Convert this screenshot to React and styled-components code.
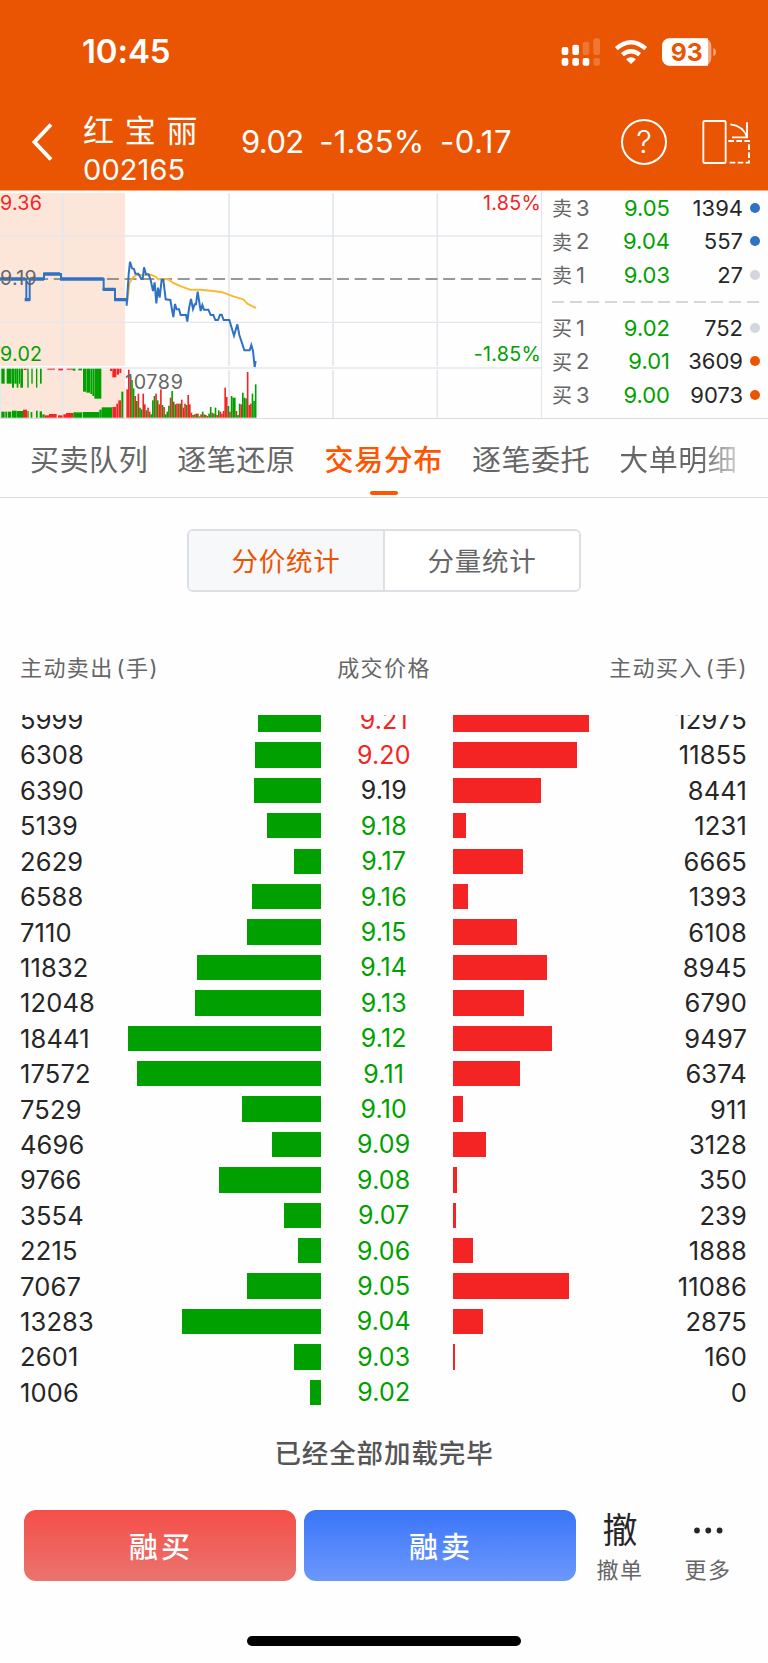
import React, { useState } from 'react';
import styled, { createGlobalStyle } from 'styled-components';

const RED = '#f52424';
const GREEN = '#00a000';
const ORANGE = '#ea5504';
const INK = '#262626';
const GREY = '#666';

const GlobalStyle = createGlobalStyle`
    * {
        box-sizing: border-box;
    }
    body {
        margin: 0;
        background: #fefefe;
        font-family: Inter, "Noto Sans CJK SC", sans-serif;
        color: ${INK};
    }
    button {
        font-family: inherit;
        border: none;
        padding: 0;
        margin: 0;
        background: none;
        color: inherit;
    }
`
const Page = styled.div`
    width: 768px;
    height: 1663px;
    display: flex;
    flex-direction: column;
    overflow: hidden;
`

/* header */
const Header = styled.header`
    height: 191px;
    flex: none;
    background: ${ORANGE};
    border-bottom: 1px solid #f4aa82;
    color: #fff;
`
const StatusBar = styled.div`
    height: 103px;
    padding: 0 51px 0 82px;
    display: flex;
    align-items: center;
    justify-content: space-between;
`
const Clock = styled.span`
    font-size: 33px;
    font-weight: 600;
    letter-spacing: -0.1px;
    margin-bottom: 1px;
`
const NavRow = styled.div`
    height: 87px;
    padding: 0 17px 0 31px;
    display: flex;
    align-items: center;
`
const BackButton = styled.button`
    width: 52px;
    height: 40px;
    margin-bottom: 10px;
`
const Stock = styled.div`
    width: 158px;
    padding-top: 8px;
`
const StockName = styled.div`
    font-size: 31px;
    line-height: 38px;
    letter-spacing: 10.7px;
    font-weight: 400;
`
const StockCode = styled.div`
    font-size: 29px;
    line-height: 39px;
    letter-spacing: 0.1px;
`
const Quote = styled.div`
    flex: 1;
    display: flex;
    gap: 15.5px;
    font-size: 31px;
    margin-bottom: 10px;
    letter-spacing: 0.3px;
    span:first-child {
        letter-spacing: -0.6px;
    }
    span:last-child {
        letter-spacing: 0.5px;
    }
`
const NavIcons = styled.div`
    display: flex;
    align-items: center;
    gap: 34px;
    margin-bottom: 10px;
`
const HelpButton = styled.button`
    width: 46px;
    height: 46px;
    border: 2px solid #fff;
    border-radius: 50%;
    font-size: 31px;
    font-weight: 300;
    line-height: 42px;
`

/* market panel */
const Market = styled.section`
    height: 228px;
    flex: none;
    display: flex;
    border-bottom: 1px solid #d9dbe0;
`
const ChartBox = styled.div`
    width: 542px;
    border-right: 1px solid #e3e5ea;
`
const Orders = styled.div`
    flex: 1;
    padding: 0 8px 0 10px;
`
const OrderRow = styled.div`
    height: 33.5px;
    display: flex;
    align-items: center;
    font-size: 22px;
`
const OrderLabel = styled.span`
    width: 58px;
    color: ${GREY};
    font-size: 20px;
    display: flex;
    align-items: center;
    gap: 4px;
`
const OrderLevel = styled.span`
    font-size: 22px;
`
const OrderPrice = styled.span`
    width: 60px;
    text-align: right;
    color: ${GREEN};
`
const OrderVolume = styled.span`
    flex: 1;
    text-align: right;
`
const Dot = styled.i`
    width: 10px;
    height: 10px;
    margin-left: 7px;
    border-radius: 50%;
    background: ${props => props.$color};
`
const OrderDivider = styled.div`
    height: 2px;
    margin: 9.5px 0 8px;
    background: repeating-linear-gradient(90deg, #d3d6dc 0 12px, transparent 12px 17.7px);
`

/* tabs */
const Tabs = styled.nav`
    height: 79px;
    flex: none;
    display: flex;
    gap: 29.1px;
    padding-left: 30px;
    border-bottom: 1px solid #d9dce2;
`
const Tab = styled.button`
    height: 78px;
    display: flex;
    flex-direction: column;
    align-items: center;
    flex: none;
    font-size: 29px;
    line-height: 43px;
    padding-top: 20px;
    letter-spacing: 0.55px;
    font-weight: ${props => (props.$active ? 500 : 400)};
    color: ${props => (props.$active ? '#ff5500' : GREY)};
    ${props => props.$fade && `
        color: transparent;
        background: linear-gradient(90deg, ${GREY} 68%, #ccc 100%);
        background-clip: text;
        -webkit-background-clip: text;
    `}
    &::after {
        content: "";
        width: 28px;
        height: 4px;
        margin-top: 9px;
        border-radius: 2px;
        background: ${props => (props.$active ? '#ff5500' : 'transparent')};
    }
`
const Segment = styled.div`
    width: 394px;
    height: 63px;
    flex: none;
    margin: 31px 0 0 187px;
    display: flex;
    border: 2px solid #dcdfe4;
    border-radius: 6px;
    overflow: hidden;
`
const SegmentButton = styled.button`
    flex: 1;
    font-size: 26.5px;
    letter-spacing: 0.8px;
    padding-bottom: 2px;
    color: ${props => (props.$active ? ORANGE : GREY)};
    background: ${props => (props.$active ? '#f7f8fa' : '#fff')};
    & + & {
        border-left: 2px solid #dcdfe4;
    }
`

/* distribution */
const Columns = styled.div`
    height: 123px;
    flex: none;
    padding: 30px 20px 0 20px;
    display: grid;
    grid-template-columns: 1fr 100px 1fr;
    font-size: 22px;
    letter-spacing: 1.4px;
    line-height: 92px;
    color: ${GREY};
`
const ColumnTitle = styled.span`
    text-align: ${props => props.$align};
    white-space: nowrap;
`
const Unit = styled.span`
    margin-left: 3px;
`
const List = styled.div`
    height: 695px;
    flex: none;
    overflow: hidden;
    display: flex;
    flex-direction: column;
    justify-content: flex-end;
`
const Row = styled.div`
    height: 35.42px;
    flex: none;
    display: grid;
    grid-template-columns: 106px 195px 132px 195px 99px;
    padding: 0 21px 0 20px;
    align-items: center;
    font-size: 25.5px;
    letter-spacing: 0.15px;
`
const Price = styled.span`
    text-align: center;
    padding-right: 6.5px;
    font-size: 25px;
    color: ${props => props.$color};
`
const Volume = styled.span`
    text-align: ${props => props.$align};
    white-space: nowrap;
`
const Bar = styled.div`
    height: 25.4px;
    justify-self: ${props => (props.$sell ? 'end' : 'start')};
    background: ${props => (props.$sell ? GREEN : RED)};
`
const Loaded = styled.p`
    height: 100px;
    flex: none;
    margin: 0;
    text-align: center;
    font-size: 26.5px;
    font-weight: 500;
    letter-spacing: 0.9px;
    line-height: 87px;
    color: #555;
`

/* bottom bar */
const Actions = styled.div`
    height: 126px;
    flex: none;
    display: flex;
    align-items: flex-start;
    gap: 8px;
    padding-left: 24px;
`
const TradeButton = styled.button`
    width: 272px;
    height: 71px;
    border-radius: 12px;
    padding: 0 0 2px 2px;
    font-size: 29px;
    font-weight: 500;
    letter-spacing: 3px;
    color: #fff;
    background: linear-gradient(180deg, ${props => props.$from}, ${props => props.$to});
`
const SmallActions = styled.div`
    display: flex;
    gap: 8px;
    margin-left: -4px;
`
const SmallAction = styled.button`
    width: 80px;
    height: 80px;
    display: flex;
    flex-direction: column;
    align-items: center;
`
const ActionIcon = styled.span`
    height: 42px;
    flex: none;
    display: flex;
    font-size: 35px;
    line-height: 40px;
`
const ActionLabel = styled.span`
    font-size: 22px;
    line-height: 36px;
    letter-spacing: 1.4px;
    color: ${GREY};
`
const HomeIndicator = styled.div`
    width: 274px;
    height: 10px;
    flex: none;
    margin: 0 auto;
    border-radius: 5px;
    background: #000;
`

const orders = [
    { side: '卖', level: 3, price: '9.05', volume: 1394, dot: '#2f72c4' },
    { side: '卖', level: 2, price: '9.04', volume: 557, dot: '#2f72c4' },
    { side: '卖', level: 1, price: '9.03', volume: 27, dot: '#d3d6dc' },
    { side: '买', level: 1, price: '9.02', volume: 752, dot: '#d3d6dc' },
    { side: '买', level: 2, price: '9.01', volume: 3609, dot: ORANGE },
    { side: '买', level: 3, price: '9.00', volume: 9073, dot: ORANGE },
]

const tabs = ['买卖队列', '逐笔还原', '交易分布', '逐笔委托', '大单明细']

// [sell, price, buy]
const distribution = [
    [5999, '9.21', 12975],
    [6308, '9.20', 11855],
    [6390, '9.19', 8441],
    [5139, '9.18', 1231],
    [2629, '9.17', 6665],
    [6588, '9.16', 1393],
    [7110, '9.15', 6108],
    [11832, '9.14', 8945],
    [12048, '9.13', 6790],
    [18441, '9.12', 9497],
    [17572, '9.11', 6374],
    [7529, '9.10', 911],
    [4696, '9.09', 3128],
    [9766, '9.08', 350],
    [3554, '9.07', 239],
    [2215, '9.06', 1888],
    [7067, '9.05', 11086],
    [13283, '9.04', 2875],
    [2601, '9.03', 160],
    [1006, '9.02', 0],
]
const LAST_CLOSE = 9.19
const MAX_VOLUME = 18441
const MAX_BAR = 193

// call auction bars: [x, width, height, color]
const auctionTop = [
    [4, 10, 45, 'g'], [20, 15, 45, 'g'], [36, 6, 57, 'g'], [43, 7, 45, 'g'], [50, 5, 57, 'g'], [56, 4, 45, 'g'],
    [61, 8, 57, 'g'], [71, 9, 4, 'r'], [82, 4, 57, 'g'], [94, 4, 45, 'g'], [108, 4, 57, 'g'], [120, 5, 45, 'g'],
    [142, 23, 3, 'r'], [175, 14, 5, 'r'], [200, 18, 3, 'r'], [218, 8, 6, 'g'], [235, 11, 5, 'g'], [249, 9, 69, 'g'],
    [259, 11, 72, 'g'], [271, 5, 76, 'g'], [277, 5, 82, 'g'], [283, 21, 90, 'g'], [330, 6, 7, 'r'], [337, 12, 26, 'r'],
    [350, 7, 18, 'r'], [358, 6, 13, 'r'],
]
const auctionBottom = [
    [4, 10, 18, 'g'], [16, 5, 18, 'g'], [23, 11, 18, 'g'], [36, 14, 21, 'g'], [51, 18, 20, 'g'], [69, 12, 24, 'r'],
    [82, 4, 20, 'g'], [92, 5, 17, 'g'], [108, 5, 21, 'g'], [119, 7, 19, 'g'], [127, 7, 10, 'g'], [134, 13, 7, 'r'],
    [147, 23, 11, 'r'], [174, 14, 7, 'r'], [190, 8, 10, 'r'], [198, 22, 14, 'r'], [220, 26, 16, 'g'], [248, 50, 17, 'g'],
    [298, 7, 24, 'g'], [305, 31, 31, 'g'], [337, 11, 32, 'r'], [349, 5, 42, 'r'], [355, 8, 52, 'r'], [364, 6, 78, 'g'],
]
const minuteVolume = 'r85 r144 r125 g113 g88 r65 g50 r72 g30 g25 r72 r40 g22 r30 r18 g10 g52 g65 r72 g52 r40 r85 g38 r32 g10 g18 g36 r60 g80 r48 g40 r42 r42 g42 r54 r30 r42 g38 r68 r40 r15 g8 r10 g12 r12 g4 r10 g18 r10 g8 r5 g12 g32 r15 g12 g30 r8 g22 r18 r12 r20 r90 r62 g35 r18 g65 g60 g60 r20 g8 g42 r40 g75 g60 g58 r137 r38 r42 g72 g50 g100'.split(' ')

const fills = { r: RED, g: GREEN }

const StatusIcons = () => (
    <svg width="157" height="32" viewBox="480 105 471 96" fill="#fff">
        <rect x="485" y="138" width="20" height="24" rx="6" />
        <rect x="517" y="131" width="20" height="31" rx="6" />
        <rect x="548" y="122" width="20" height="40" rx="6" opacity=".2" />
        <rect x="580" y="112" width="20" height="50" rx="6" opacity=".2" />
        <rect x="485" y="171" width="20" height="23" rx="6" />
        <rect x="517" y="171" width="20" height="23" rx="6" />
        <rect x="548" y="171" width="20" height="23" rx="6" />
        <rect x="580" y="171" width="20" height="23" rx="6" opacity=".2" />
        <path d="M678 175q15-12 30 0l-15 14z" />
        <path d="M667 161q26-21 52 0M649 143q44-38 88 0" fill="none" stroke="#fff" strokeWidth="13" />
        <rect x="786" y="112" width="148" height="82" rx="23" opacity=".5" />
        <path d="M809 112h115v82h-115a23 23 0 0 1-23-23v-36a23 23 0 0 1 23-23z" />
        <path d="M940 141q8 3 8 12t-8 12z" opacity=".5" />
        <text x="860" y="179" fontSize="74" fontWeight="700" textAnchor="middle" fill={ORANGE}>93</text>
    </svg>
)

const RotateIcon = () => (
    <svg width="50" height="48" viewBox="902 352 150 144" fill="none" stroke="#fff" strokeWidth="5.5">
        <rect x="909" y="361" width="67" height="126" rx="4" />
        <path d="M990 371q38 4 50 38M1040 365v45h-45" />
        <path d="M984 421h62v65h-62" strokeDasharray="17 7" />
    </svg>
)

const Bars = ({ data, top }) => data.map(([x, w, h, c]) => (
    <rect key={x} x={x} y={top ? 551 : 698 - h} width={w} height={h} fill={fills[c]} />
))

const Chart = () => (
    <svg width="541" height="227" viewBox="0 18 1623 681" fontSize="59" style={{ display: 'block' }}>
        <rect x="0" y="24" width="375" height="519" fill="#fce6da" />
        <rect x="0" y="553" width="375" height="146" fill="#fce6da" />
        <g stroke="#e3e7ee" strokeWidth="5">
            <path d="M188 24V543M687 24V543M999 24V543M1312 24V543" />
            <path d="M188 555V699M687 555V699M999 555V699M1312 555V699" />
            <path d="M0 153H1623M0 412H1623M0 549H1623" strokeWidth="4" />
            <path d="M1 553V699" />
        </g>
        <path d="M2 282H1623" stroke="#777" strokeWidth="5" strokeDasharray="36 17.1" />
        <Bars data={auctionTop} top />
        <Bars data={auctionBottom} />
        {minuteVolume.map((v, i) => {
            const h = Number(v.slice(1))
            return <rect key={i} x={379 + i * 4.82} y={698 - h} width="4.9" height={h} fill={fills[v[0]]} />
        })}
        <polyline
            fill="none" stroke="#fdb833" strokeWidth="6" strokeLinejoin="round"
            points="382,350 388,295 398,278 410,270 455,270 465,274 475,283 505,283 520,294 545,305 570,314 600,314 640,318 668,322 700,334 730,343 742,356 768,369"
        />
        <polyline
            fill="none" stroke="#2f72c4" strokeWidth="6"
            points="0,282 79,282 79,344 89,344 89,282 132,282 132,267 183,267 183,282 311,282 311,313 345,313 345,344 380,344 380,362 386,268 390,230 396,250 402,252 406,266 415,266 424,282 428,282 432,247 438,268 446,268 452,285 459,318 464,292 469,355 474,308 479,338 485,284 490,284 497,343 511,345 520,396 525,357 530,373 537,373 542,390 558,390 562,410 567,370 573,342 579,372 584,358 588,358 593,320 602,378 607,360 612,374 625,374 632,390 640,390 646,405 654,405 660,389 665,389 671,405 688,405 702,452 712,418 718,450 733,496 749,496 754,480 759,498 764,546 767,528"
        />
        <path
            d="M0 282H76M74 344H90M90 282H132M130 267H180M180 282H311M308 313H346M343 344H380"
            stroke="#2f72c4" strokeWidth="10"
        />
        <g letterSpacing=".8">
            <text x="0" y="74" fill={RED}>9.36</text>
            <text x="0" y="300" fill={GREY}>9.19</text>
            <text x="0" y="527" fill={GREEN}>9.02</text>
            <text x="1623" y="74" fill={RED} textAnchor="end">1.85%</text>
            <text x="1623" y="527" fill={GREEN} textAnchor="end">-1.85%</text>
            <text x="375" y="611" fill={GREY} letterSpacing="2">10789</text>
        </g>
    </svg>
)

const OrderItem = ({ item }) => (
    <OrderRow>
        <OrderLabel>{item.side}<OrderLevel>{item.level}</OrderLevel></OrderLabel>
        <OrderPrice>{item.price}</OrderPrice>
        <OrderVolume>{item.volume}</OrderVolume>
        <Dot $color={item.dot} />
    </OrderRow>
)

const priceColor = (price) => {
    if (Number(price) > LAST_CLOSE) return RED
    if (Number(price) < LAST_CLOSE) return GREEN
    return INK
}

const App = () => {
    const [tab, setTab] = useState(2)
    const [mode, setMode] = useState('price')

    return (
        <Page>
            <GlobalStyle />
            <Header>
                <StatusBar>
                    <Clock>10:45</Clock>
                    <StatusIcons />
                </StatusBar>
                <NavRow>
                    <BackButton aria-label="back">
                        <svg width="52" height="40" viewBox="0 0 52 40" fill="none" stroke="#fff" strokeWidth="4">
                            <path d="M20 2.5L3.5 20L20 37.5" />
                        </svg>
                    </BackButton>
                    <Stock>
                        <StockName>红宝丽</StockName>
                        <StockCode>002165</StockCode>
                    </Stock>
                    <Quote>
                        <span>9.02</span>
                        <span>-1.85%</span>
                        <span>-0.17</span>
                    </Quote>
                    <NavIcons>
                        <HelpButton>?</HelpButton>
                        <RotateIcon />
                    </NavIcons>
                </NavRow>
            </Header>
            <Market>
                <ChartBox>
                    <Chart />
                </ChartBox>
                <Orders>
                    {orders.slice(0, 3).map(item => <OrderItem key={item.price} item={item} />)}
                    <OrderDivider />
                    {orders.slice(3).map(item => <OrderItem key={item.price} item={item} />)}
                </Orders>
            </Market>
            <Tabs>
                {tabs.map((name, i) => (
                    <Tab key={name} $active={tab === i} $fade={i === 4} onClick={() => setTab(i)}>{name}</Tab>
                ))}
            </Tabs>
            <Segment>
                <SegmentButton $active={mode === 'price'} onClick={() => setMode('price')}>分价统计</SegmentButton>
                <SegmentButton $active={mode === 'volume'} onClick={() => setMode('volume')}>分量统计</SegmentButton>
            </Segment>
            <Columns>
                <ColumnTitle $align="left">主动卖出<Unit>(手)</Unit></ColumnTitle>
                <ColumnTitle $align="center">成交价格</ColumnTitle>
                <ColumnTitle $align="right">主动买入<Unit>(手)</Unit></ColumnTitle>
            </Columns>
            <List>
                {distribution.map(([sell, price, buy]) => (
                    <Row key={price}>
                        <Volume $align="left">{sell}</Volume>
                        <Bar $sell style={{ width: sell / MAX_VOLUME * MAX_BAR }} />
                        <Price $color={priceColor(price)}>{price}</Price>
                        <Bar style={{ width: buy / MAX_VOLUME * MAX_BAR }} />
                        <Volume $align="right">{buy}</Volume>
                    </Row>
                ))}
            </List>
            <Loaded>已经全部加载完毕</Loaded>
            <Actions>
                <TradeButton $from="#f54e49" $to="#ea746e">融买</TradeButton>
                <TradeButton $from="#3a75f8" $to="#6c98fd">融卖</TradeButton>
                <SmallActions>
                    <SmallAction>
                        <ActionIcon>撤</ActionIcon>
                        <ActionLabel>撤单</ActionLabel>
                    </SmallAction>
                    <SmallAction>
                        <ActionIcon>
                            <svg width="30" height="42" viewBox="0 0 30 42" fill={INK}>
                                <circle cx="4" cy="20.5" r="2.9" />
                                <circle cx="15.3" cy="20.5" r="2.9" />
                                <circle cx="26.6" cy="20.5" r="2.9" />
                            </svg>
                        </ActionIcon>
                        <ActionLabel>更多</ActionLabel>
                    </SmallAction>
                </SmallActions>
            </Actions>
            <HomeIndicator />
        </Page>
    )
}

export default App
